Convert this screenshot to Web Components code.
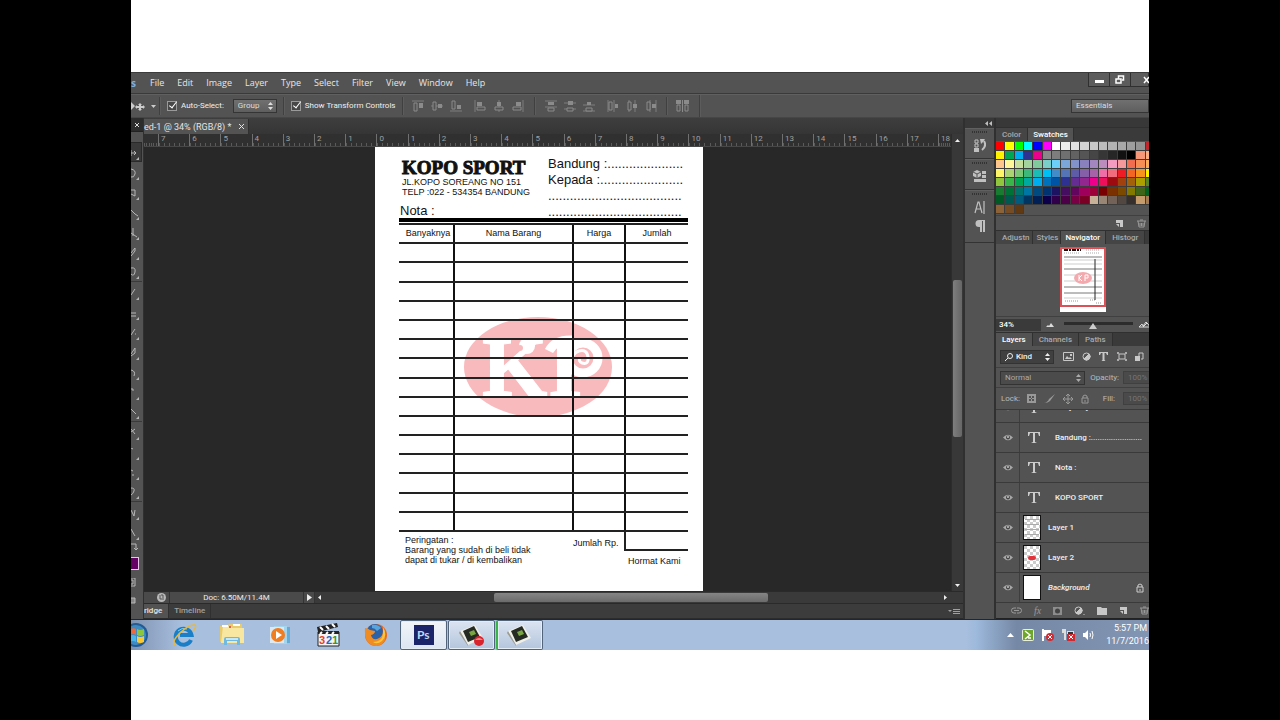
<!DOCTYPE html>
<html lang="en">
<head>
<meta charset="utf-8">
<title>Photo editor desktop</title>
<style>
html,body{margin:0;background:#000}
body{font:8px/12px Roboto,"Open Sans",sans-serif;color:#dcdcdc}
</style>
</head>
<body>
<desk-screen></desk-screen>
<script>
const BASE = `*{box-sizing:border-box}
button,input,select{font:inherit;color:inherit;background:none;border:0;padding:0;margin:0;border-radius:0;appearance:none;outline:0}
button{display:block}svg{display:block;flex:none}`;
function define(name, css, html, setup) {
  const t = document.createElement('template');
  t.innerHTML = `<style>${BASE}${css}</style>${html}`;
  customElements.define(name, class extends HTMLElement {
    constructor() {
      super();
      this.attachShadow({mode: 'open'}).append(t.content.cloneNode(true));
    }
    connectedCallback() { if (setup) setup(this.shadowRoot, this); }
  });
}
const svg = (w, h, body, extra = '') => `<svg width="${w}" height="${h}" viewBox="0 0 ${w} ${h}" fill="none" stroke="currentColor" ${extra} aria-hidden="true">${body}</svg>`;
const fill = (w, h, body) => `<svg width="${w}" height="${h}" viewBox="0 0 ${w} ${h}" fill="currentColor" aria-hidden="true">${body}</svg>`;
const updown = fill(5, 8, '<path d="M0 3 2.5 0 5 3zM0 5h5L2.500 8z"/>');

/* ---------- frame ---------- */
define('desk-screen', `
:host{display:grid;grid-template-columns:131px minmax(0,1fr) 131px;min-height:100vh}
main{grid-column:2;background:#fff;padding:72px 0 70px;display:flex;flex-direction:column}
.app{flex:1;display:flex;flex-direction:column;background:#535353;overflow:hidden}
.work{flex:1;display:grid;grid-template-columns:13px minmax(0,1fr) 32px 153px;background:#383838}
`, `<main><div class="app"><app-menu></app-menu><option-bar></option-bar>
<div class="work"><tool-strip></tool-strip><doc-window></doc-window><icon-dock></icon-dock><side-panels></side-panels></div>
<task-bar></task-bar></div></main>`);

/* ---------- menu ---------- */
define('app-menu', `
:host{display:flex;height:22px;border-top:1px solid #3c3c3c;border-bottom:1px solid #3a3a3a;font:9px/20px "Open Sans",sans-serif;color:#e6e6e6;overflow:hidden}
b{font-size:10px;color:#7fb0dc;width:17px;flex:none}
nav{display:flex;gap:13px;flex:1;padding-left:2px}
.win{display:flex;align-self:flex-start;height:14px;border:1px solid #303030;border-top:0;background:#5c5c5c;color:#fff}
.win button{width:21px;display:grid;place-items:center;border-right:1px solid #303030}
.win button:last-child{width:17px;padding-left:12px;border:0}
`, `<b>s</b><nav>${['File','Edit','Image','Layer','Type','Select','Filter','View','Window','Help'].map(m => `<button>${m}</button>`).join('')}</nav>
<div class="win"><button aria-label="Minimize">${fill(9,9,'<path d="M0 5h9v3H0z"/>')}</button>
<button aria-label="Restore">${svg(10,9,'<path d="M3.500 3.500V1h5v4H7M1 4h5v4H1z" stroke-width="1.500"/>')}</button>
<button aria-label="Close">${svg(7,8,'<path d="M1 1l5 6M6 1L1 7" stroke-width="1.500"/>')}</button></div>`);

/* ---------- options ---------- */
const alignIcons = [
 ['M0 1h12','M2 3h3v8H2z','M7 3h4v5H7z'],
 ['M0 6h12','M2 2h3v8H2z','M7 4h4v4H7z'],
 ['M0 11h12','M2 1h3v8H2z','M7 5h4v4H7z'],
 ['M1 0v12','M3 7h8v3H3z','M3 2h5v4H3z'],
 ['M6 0v12','M2 7h8v3H2z','M4 2h4v4H4z'],
 ['M11 0v12','M1 7h8v3H1z','M4 2h5v4H4z'],
 ['M0 1h12M0 7h12','M3 8h6v3H3z','M3 2h6v3H3z'],
 ['M0 3h12M0 9h12','M3 8h6v3H3z','M4 1h5v4H4z'],
 ['M0 5h12M0 11h12','M3 8h6v3H3z','M4 2h4v3H4z'],
 ['M1 0v12M7 0v12','M2 2h3v8H2z','M8 4h3v4H8z'],
 ['M3 0v12M9 0v12','M2 2h3v8H2z','M7 4h4v4H7z'],
 ['M5 0v12M11 0v12','M2 2h3v8H2z','M7 4h4v4H7z']
].map(([l,o,f]) => svg(12,12,`<path d="${l}" opacity=".8"/><path d="${o}" fill="#535353"/><path d="${f}" fill="currentColor" stroke="none"/>`));
define('option-bar', `
:host{display:flex;align-items:center;height:24px;border-top:1px solid #606060;border-bottom:1px solid #464646;overflow:hidden}
i{width:2px;height:18px;background:#404040;border-right:1px solid #5c5c5c;flex:none}
label{display:flex;align-items:center;gap:4px;color:#f0f0f0;white-space:nowrap}
.move{display:flex;align-items:center;gap:5px;width:28px;color:#ccc}
input{width:10px;height:10px;border:1px solid #9a9a9a;background:#474747;display:grid;place-items:center;overflow:visible}
input:checked::after{content:"";width:3px;height:7px;border:solid #fff;border-width:0 1px 1px 0;transform:translate(1px,-2px) rotate(38deg)}
.sel{position:relative;display:flex;align-items:center;border:1px solid #353535;background:linear-gradient(#707070,#5e5e5e);height:14px}
.sel svg{position:absolute;right:3px}
select{width:42px;height:12px;padding-left:4px;line-height:12px}
.set{display:flex;gap:7px;color:#8b8b8b}
.end{margin-left:auto;width:78px;height:14px}.end select{width:78px}
`, `<div class="move">${fill(15,12,'<path d="M0 2v8l4-4zM9 3l2 2h-1v1h2V5l2 2-2 2V8h-2v1h1l-2 2-2-2h1V8H6v1L4 7l2-2v1h2V5H7z"/>')}${fill(5,3,'<path d="M0 0h5L2.500 3z"/>')}</div>
<i></i><label style="margin:0 9px 0 6px"><input type="checkbox" checked>Auto-Select:</label>
<span class="sel"><select aria-label="Auto select target"><option>Group</option></select>${updown}</span>
<i style="margin:0 6px"></i><label style="margin-right:7px"><input type="checkbox" checked>Show Transform Controls</label>
<i style="margin-right:8px"></i><div class="set">${alignIcons.slice(0,3).join('')}</div><div class="set" style="margin:0 10px 0 12px">${alignIcons.slice(3,6).join('')}</div>
<i style="margin-right:9px"></i><div class="set">${alignIcons.slice(6,9).join('')}</div><div class="set" style="margin:0 9px 0 12px">${alignIcons.slice(9).join('')}</div>
<i style="margin-right:8px"></i><div class="set">${svg(13,12,'<path d="M1 5h3v6H1zM9 5h3v6H9zM6.500 0v12"/><path d="M0 0h5v4H0zM8 0h5v4H8z" fill="currentColor" stroke="none"/>')}</div><i style="margin-left:10px;height:22px"></i>
<span class="sel end"><select aria-label="Workspace"><option>Essentials</option></select></span>`);

/* ---------- tools ---------- */
const tools = ['M0 5h5M3 3l2 2-2 2M0 2v6','M0 1q5 1 4 5t-4 3','M0 2h4v6L0 6','M0 2l4 4 3 2','M2 0v8M0 5l6 4','M0 5l4-5v3l-4 5','M0 1q5-1 4 4t-4 2','M0 7l4-6','M0 5h5M0 8h5','M0 7l4-6M4 6h1','M0 6l4-6v5L0 8','M0 2q5 1 3 6','M0 1h2v2','M0 2l5 5','M0 4l4-3M0 1l4 5','M0 0l2 1','M0 2l2 1M1 7h2','M0 1q4 0 3 3t-3 4','M0 2l3 6 1-6','M0 1l4 7'];
define('tool-strip', `
:host{display:flex;flex-direction:column;background:#535353;border-right:1px solid #303030;color:#b8b8b8;overflow:hidden}
.x{height:14px;background:#2c2c2c;border-bottom:1px solid #222;color:#ddd;padding-left:3px;margin-bottom:10px;flex:none}
.t{height:20px;width:11px;padding-top:3px}
.t:nth-of-type(2){background:#3a3a3a;border:1px solid #2a2a2a;border-left:0}
.sep{border-bottom:1px solid #3a3a3a}
.fg{width:8px;height:13px;background:#650065;border:1px solid #e8c8e8;border-left:0;margin:6px 0 8px;flex:none}
`, `<button class="x" aria-label="Close tools">${svg(6,6,'<path d="M1 1l4 4M5 1L1 5"/>')}</button>${tools.map((d,i) => `<button class="t${[6,13,17].includes(i)?' sep':''}" aria-label="Tool ${i+1}">${svg(8,12,`<path d="${d}"/><path d="M8 9v3H5z" fill="currentColor" stroke="none"/>`)}</button>`).join('')}
${svg(8,9,'<path d="M0 2h5v6M3 6l2 2 2-2"/>')}<span class="fg"></span><button aria-label="Quick mask">${svg(5,9,'<path d="M0 0h4v8H0M0 2h2v4H0"/>')}</button><button style="margin-top:10px" aria-label="Screen mode">${svg(5,9,'<path d="M0 1h4v5H0" fill="#888"/>')}</button>`);

/* ---------- document window ---------- */
define('doc-window', `
:host{display:flex;flex-direction:column;min-width:0;background:#282828;border-right:1px solid #303030}
.tabs{height:16px;background:linear-gradient(#3e3e3e,#353535);display:flex}
.tab{display:flex;align-items:center;background:#535353;height:15px;margin-top:1px;padding-right:4px;border-right:1px solid #303030;color:#e4e4e4;font-size:9px;white-space:pre}
.tab button{margin-left:8px}
.mid{flex:1;display:grid;grid-template-columns:minmax(0,1fr) 12px}
.view{display:flex;flex-direction:column;min-width:0}
.canvas{flex:1;display:flex;justify-content:center;padding-right:17px}
.vs{background:#383838;border-left:1px solid #2c2c2c;display:flex;flex-direction:column;align-items:center;color:#eee;padding:5px 0 4px}
.vs i{width:9px;height:157px;margin:138px 0 auto;background:linear-gradient(90deg,#7e7e7e,#666);border-radius:2px}
.status{height:13px;display:flex;align-items:center;background:#3a3a3a;border-top:1px solid #2a2a2a;border-bottom:1px solid #2a2a2a;color:#eee}
.cell{background:#4a4a4a;border-right:1px solid #333;height:11px;display:grid;place-items:center}
.status i{height:9px;width:274px;background:linear-gradient(#858585,#6b6b6b);border-radius:2px;margin:0 auto 0 167px}
.foot{height:15px;background:#3c3c3c;display:flex;border-bottom:1px solid #2c2c2c;color:#a0a0a0;font-weight:500}
.foot button{border-right:1px solid #303030;padding:0 5px;line-height:14px;height:14px}
.foot button:first-of-type{background:#535353;color:#e6e6e6;padding:0 6px 0 0}
`, `<div class="tabs"><div class="tab">ed-1 @ 34% (RGB/8) *<button aria-label="Close document">${svg(5,5,'<path d="M0 0l5 5M5 0L0 5"/>')}</button></div></div>
<div class="mid"><div class="view"><ruler-bar></ruler-bar><div class="canvas"><nota-page></nota-page></div></div>
<div class="vs">${fill(5,3,'<path d="M0 3h5L2.500 0z"/>')}<i></i>${fill(5,3,'<path d="M0 0h5L2.500 3z"/>')}</div></div>
<div class="status"><span class="cell" style="width:26px;padding-left:10px">${fill(9,9,'<circle cx="4.500" cy="4.500" r="4.500" fill="#b8b8b8"/><path d="M3 2v4h4M4 2h2v3" stroke="#555" fill="none"/>')}</span><span class="cell" style="width:134px">Doc: 6.50M/11.4M</span><span class="cell" style="width:11px">${fill(5,7,'<path d="M0 0v7l5-3.500z"/>')}</span>${fill(12,5,'<path d="M6 0v5L3 2.500z"/>')}<i></i>${fill(21,5,'<path d="M2 0v5l3-2.500z"/>')}</div>
<div class="foot"><button>ridge</button><button>Timeline</button>${fill(12,8,'<path d="M0 2h4L2 4zM5 1h7v1H5zM5 3h7v1H5zM5 5h7v1H5z"/>').replace('<svg','<svg style="margin:4px 3px 0 auto"')}</div>`);

define('ruler-bar', `
:host{display:flex;height:13px;background:#303030;border-bottom:1px solid #484848;color:#a0a0a0;line-height:10px;font-size:8px}
span{flex:1;min-width:0;border-left:1px solid #707070;padding-left:2px;white-space:nowrap;background:repeating-linear-gradient(90deg,#5a5a5a 0 1px,transparent 1px 16.66%) 0 100%/100% 3px no-repeat}
span:first-of-type{flex:0 0 14px;border:0}span:last-of-type{flex:0 0 13px}
`, '', root => {
  ['',7,6,5,4,3,2,1,0,1,2,3,4,5,6,7,8,9,10,11,12,13,14,15,16,17,18].forEach(n => {
    const s = document.createElement('span'); s.textContent = n; root.append(s);
  });
});

define('kp-mark', `:host{display:block}svg{width:100%;height:auto}text{font:bold 84px "Liberation Serif",serif}`,
`<svg viewBox="0 0 148 100"><ellipse cx="74" cy="50" rx="74" ry="50" fill="#f9babd"/>
<g fill="#fff" stroke="#fff"><text x="18" y="79">K</text><text x="85" y="79">P</text></g>
<path d="M56 20l9-3 5 5-8 5z" fill="#f9babd"/><circle cx="63" cy="29" r="8" fill="#fff"/><circle cx="56" cy="31" r="3" fill="#f9babd"/>
<path d="M84 17h22v7q-12 1-14 9l-8 6z" fill="#f9babd"/>
<path d="M85 34q6-12 24-11" stroke="#fff" stroke-width="9" fill="none"/>
<circle cx="119" cy="41" r="15" fill="#f9babd" stroke="#fff" stroke-width="9"/>
<path d="M107 50q0-14 8-16t9 6-6 6q-4-2-2-5" stroke="#fff" stroke-width="3" fill="none"/></svg>`);

define('nota-page', `
:host{display:block;position:relative;width:328px;flex:none;background:#fff;color:#111;font:9px/10px "Liberation Sans",sans-serif;padding:9px 15px 0 24px}
header{display:grid;grid-template-columns:148px 1fr;height:62px}
h1{font:bold 19px/24px "Liberation Serif",serif;margin:0 0 0 3px;-webkit-text-stroke:1px #111;white-space:nowrap;height:21px}
.ad{margin-left:3px;white-space:nowrap}
.fields{font-size:13px;line-height:16px;white-space:nowrap;padding-left:1px}
.left{display:flex;flex-direction:column;white-space:nowrap}.nota{font-size:13px;line-height:16px;margin:6px 0 0 1px}
.bar{height:4px;background:#000;margin-bottom:1px}
table{position:relative;width:289px;height:309px;border-collapse:collapse;table-layout:fixed}
tr{height:19px}th{font-weight:400;padding:0 0 2px;text-align:center}
td{padding:0}th,td{border-bottom:2px solid #222;border-top:2px solid #222}
th:first-child{padding-left:4px}
th+th,td+td{border-left:2px solid #111}
kp-mark{position:absolute;left:89px;top:170px;width:148px}
.foot{display:grid;grid-template-columns:169px 57px 63px;height:50px}
.foot p{margin:3px 0 0 6px;white-space:nowrap}.foot .rp{margin:6px 0 0}.foot .rp{padding-left:5px}
.box{border:solid #222;border-width:0 0 2px 2px;height:19px;margin-left:-1px}
.hk{margin:5px 0 0 3px;white-space:nowrap}
`, `<kp-mark></kp-mark><header><div class="left"><h1>KOPO SPORT</h1><div class="ad">JL.KOPO SOREANG NO 151<br>TELP :022 - 534354 BANDUNG</div><div class="nota">Nota :</div></div>
<div class="fields">Bandung :.....................<br>Kepada :.......................<br>.....................................<br>.....................................</div></header>
<div class="bar"></div><table><colgroup><col style="width:55px"><col style="width:119px"><col style="width:52px"><col></colgroup><tbody><tr><th>Banyaknya</th><th>Nama Barang</th><th>Harga</th><th>Jumlah</th></tr></tbody></table>
<div class="foot"><p>Peringatan :<br>Barang yang sudah di beli tidak<br>dapat di tukar / di kembalikan</p><p class="rp">Jumlah Rp.</p><div><div class="box"></div><div class="hk">Hormat Kami</div></div></div>`, root => {
  const body = root.querySelector('tbody');
  for (let i = 0; i < 15; i++) {
    const r = body.insertRow();
    for (let c = 0; c < 4; c++) r.insertCell();
  }
});

/* ---------- icon dock ---------- */
define('icon-dock', `
:host{display:flex;flex-direction:column;background:#535353;border:solid #303030;border-width:0 2px 0 1px;color:#c0c0c0}
.h{height:10px;background:#383838;padding:3px 2px 0 0;display:flex;justify-content:flex-end}
.g{border-bottom:1px solid #333;border-top:1px solid #606060;padding-top:2px;display:flex;flex-direction:column;align-items:center;gap:6px}
.g::before{content:"";width:16px;height:2px;background:repeating-linear-gradient(90deg,#333 0 1px,transparent 1px 2px)}
`, `<div class="h">${fill(7,5,'<path d="M3 0v5L0 2.500zM7 0v5L4 2.500z"/>')}</div>
<div class="g" style="height:31px"><button aria-label="History">${svg(12,13,'<path d="M1 1h3v3H1zM1 5h3v3H1z"/><path d="M0 9h5v4H0z" fill="currentColor" stroke="none"/><path d="M10 2q3 5-2 9" stroke-width="2"/><path d="M11 0H6l1 5 2-2z" fill="currentColor" stroke="none"/>')}</button></div>
<div class="g" style="height:31px"><button aria-label="Properties">${fill(14,12,'<path d="M0 2l4-2 4 2v4L4 8 0 6zM9 1h4v3H9zM9 5h4v3H9zM1 9h12v3H1z"/><path d="M0 2l4 2 4-2M4 4v4" stroke="#535353" fill="none"/>')}</button></div>
<div class="g" style="height:53px"><button aria-label="Character">${svg(11,13,'<path d="M1 12L4 1h1l3 11M2 8h5M10 0v13" stroke-width="1.200"/>')}</button><button aria-label="Paragraph">${fill(10,12,'<path d="M4 0h6v12H8V1H7v11H5V7H4a3.500 3.500 0 010-7z"/>')}</button></div>`);

/* ---------- side panels ---------- */
define('panel-tabs', `
:host{display:flex;height:14px;background:#3a3a3a;border-top:1px solid #303030;overflow:hidden;flex:none;white-space:nowrap}
`, '<slot></slot>');
const swatches = [
'f00 ff0 0f0 0ff 00f f0f fff ececec e0e0e0 d4d4d4 c8c8c8 bcbcbc b2b2b2 a8a8a8 9e9e9e 949494 c1272d',
'fff200 00a651 00aeef 2e3192 ec008c 898989 7d7d7d 707070 626262 555 464646 363636 262626 111 000 f7977a fbad82',
'fdc68c fff799 c6df9c a4d49d 81ca9d 7bcdc9 6ccff7 7ca6d8 8293ca 8881be a286bd bc8cbf f49bc1 f5999d f26c4f f68e56 fbaf5d',
'fff568 acd373 7cc576 3cb878 1cbbb4 00bff3 438cca 5573b7 5e5ca7 855fa8 a763a8 ef6ea8 f16d7e ee1c24 f26522 f7941d fff200',
'8fc63d 39b54a 00a650 00a99e 00aeef 0072bc 0054a5 2f3192 652c91 91278f ed008c ee105a 9d0a0f a1410d a36209 aba000 598527',
'197b30 007236 00746b 0076a4 004a80 003370 1d1363 450e61 62055f 9e005c 9d0039 790000 7b3000 7c4900 827a00 3f6618 045f20',
'005824 005951 005b7e 003562 002056 0c004b 30004a 4b0048 7a0045 7a0026 c7b198 998675 726257 534741 362f2c c69c6d a67c52',
'8c6239 754c24 603913'].join(' ').split(' ');
define('swatch-grid', `:host{display:grid;grid-template-columns:repeat(17,1fr);grid-auto-rows:9px;margin-right:-6px;height:74px;padding-top:1px}
button{border:solid #3c3c3c;border-width:0 1px 1px 0}`,
 swatches.map(c => `<button aria-label="Swatch ${c}" style="background:#${c}"></button>`).join(''));

const newIcon = fill(9,9,'<path d="M1 1h7v7H5V4H1z"/><path d="M1 5h3v3z"/>');
const trash = svg(9,9,'<path d="M0 2h9M3 1h3M1 2l1 6h5l1-6M3 4v3M4.500 4v3M6 4v3"/>');
define('nav-thumb', `:host{display:block;width:46px;height:65px;background:#fff}
.r{width:46px;height:60px;border:2px solid #dc5058}svg{width:100%;height:100%}`,
`<div class="r"><svg viewBox="0 0 42 56"><g stroke="#555" fill="none"><path d="M2 1h17" stroke="#111" stroke-width="2" stroke-dasharray="4 1 2 1"/><path d="M2 4h16M24 1h14M24 4h14" stroke-dasharray="1 1" opacity=".5"/><path d="M2 8h38M2 20h38M2 38h38M2 44h38" stroke-width=".8"/><path d="M33 10v41" stroke="#222"/><path d="M2 11h38M2 26h38M2 15h38M2 32h38M2 49h38" opacity=".3"/><path d="M3 52h13M28 51h5M34 54h6" stroke-dasharray="1 1" opacity=".6"/></g><ellipse cx="21" cy="29" rx="9" ry="6" fill="#f3a9ad"/><path d="M17 26v6M20 26l-3 3 3 3M23 32v-6h3v3h-3" stroke="#fff" fill="none"/></svg></div>`);

const eye = fill(10,7,'<path d="M0 3.500Q5-2 10 3.500 5 9 0 3.500z" opacity=".75"/><circle cx="5" cy="3.500" r="2" fill="#444"/><circle cx="5" cy="3" r="1"/>');
const bigT = fill(13,13,'<path d="M0 1h12v4h-1l-1-3H7v9l2 1H3l2-1V2H2L1 5H0z"/>');
const lock = svg(8,10,'<path d="M1 4h6v5H1zM2 4V2q2-2 4 0v2M4 6v2"/>');
define('layer-row', `
:host{display:grid;grid-template-columns:24px 31px minmax(0,1fr) auto;align-items:center;height:30px;flex:none;border-bottom:1px solid #3a3a3a;font-weight:500;color:#f0f0f0}
.e{height:29px;border-right:1px solid #3e3e3e;display:grid;place-items:center;color:#c4c4c4}
.k{padding-left:8px;color:#ccc}
.th{display:none;margin-left:3px;width:18px;height:25px;border:1px solid #111;background:#fff}
:host([kind=grid]) .th,:host([kind=logo]) .th{background:repeating-conic-gradient(#fff 0 25%,#ccc 0 50%) 0 0/6px 6px}
:host(:not([kind=text])) .th{display:grid;place-items:center}
:host([kind=grid]) .th::after{content:"";width:14px;height:17px;background:repeating-linear-gradient(#aaa 0 1px,transparent 1px 5px)}
:host([kind=logo]) .th::after{content:"";width:8px;height:4px;background:#e5323a;border-radius:2px}
.n{white-space:nowrap;overflow:hidden;padding-left:4px}:host(:not([kind=text])) .n{margin-left:-7px}
:host([kind=bg]) .n{font-style:italic}
.l{display:none;margin-right:5px;color:#ccc}:host([kind=bg]) .l{display:block}
`, `<span class="e">${eye}</span><span><span class="k">${bigT}</span><span class="th"></span></span><span class="n"><slot></slot></span><span class="l">${lock}</span>`,
 (root, el) => root.querySelector('.k').style.display = el.getAttribute('kind') === 'text' ? 'block' : 'none');

define('side-panels', `
:host{display:flex;flex-direction:column;background:#535353;overflow:hidden;min-width:0}
panel-tabs button{font-weight:500;line-height:13px;background:#454545;border-right:1px solid #303030;padding:0 6px;color:#aaa;height:13px}
panel-tabs button[aria-selected=true]{background:#535353;color:#fff}
.h{height:9px;background:#383838;flex:none}
.row{display:flex;align-items:center;flex:none;border-top:1px solid #404040}
.nav{height:72px;flex:none;display:flex;padding:3px 0 0 64px}
.zoom input[type=text]{width:45px;height:12px;background:#3a3a3a;padding-left:3px;color:#fff;font-weight:500}
input[type=range]{width:69px;height:9px;margin:0 6px 0 10px;background:linear-gradient(#2c2c2c,#2c2c2c) 0 2px/100% 3px no-repeat}
input[type=range]::-webkit-slider-thumb{appearance:none;width:8px;height:6px;background:#ccc;clip-path:polygon(50% 0,100% 100%,0 100%);margin-top:3px}
.sel{position:relative;display:flex;align-items:center;height:14px;background:#4b4b4b;border:1px solid #333;margin-left:4px;flex:none}
.sel svg{position:absolute;right:3px}.sel svg.q{left:4px;right:auto}
select{height:12px;line-height:12px;width:100%;opacity:1}
.ic{display:flex;align-items:center;color:#c8c8c8;flex:none}
.pct{width:28px;height:13px;background:#4a4a4a;border:1px solid #404040;color:#747474;padding-left:4px;flex:none;margin-left:4px}
label{display:flex;align-items:center;margin-left:auto;color:#bbb;flex:none;margin-right:-2px}
.dim{color:#999}
.layers{flex:1 0 194px;height:194px;display:flex;flex-direction:column;justify-content:flex-end;overflow:hidden;border-top:1px solid #3a3a3a}
`, `<div class="h"></div>
<panel-tabs><button>Color</button><button aria-selected="true" style="padding:0 5px">Swatches</button></panel-tabs>
<swatch-grid></swatch-grid>
<div class="row ic" style="height:15px;justify-content:flex-end;gap:13px;padding-right:3px">${newIcon}<span class="dim">${trash}</span></div>
<panel-tabs><button style="padding-right:2px">Adjustn</button><button style="padding:0 2px 0 4px">Styles</button><button aria-selected="true" style="padding:0 5px 0 4px">Navigator</button><button>Histogr</button></panel-tabs>
<div class="nav"><nav-thumb></nav-thumb></div>
<div class="row zoom" style="height:16px"><input type="text" value="34%" aria-label="Zoom">${fill(8,5,'<path d="M0 5l2-2 1 1 2-3 3 4z"/>').replace('<svg','<svg style="margin-left:5px"')}<input type="range" value="41" aria-label="Zoom slider">${svg(12,7,'<path d="M0 6l3-3 1 2 3-4 2 2 2 3zM4 6l4-4"/>')}</div>
<panel-tabs><button aria-selected="true">Layers</button><button>Channels</button><button>Paths</button></panel-tabs>
<div class="row" style="height:21px;border:0"><span class="sel" style="width:54px;background:#404040;color:#eee;font-weight:500"><svg class="q" width="8" height="8" viewBox="0 0 8 8" fill="none" stroke="currentColor"><circle cx="5" cy="3" r="2.500"/><path d="M3 5L0 8"/></svg><select aria-label="Filter kind" style="padding-left:15px"><option>Kind</option></select>${updown}</span>
<span class="ic" style="gap:8px;padding-left:9px">${svg(11,9,'<path d="M0.500.500h10v8H.500z"/><path d="M2 7l2-3 2 2 1-1 2 2zM7 2h2v2H7z" fill="currentColor" stroke="none"/>')}${svg(9,9,'<circle cx="4.500" cy="4.500" r="3.500"/><path d="M7 2L2 7a3.500 3.500 0 005-5z" fill="currentColor"/>')}${fill(10,9,'<path d="M0 0h9v3H8L7 1H5.500v7l1 1h-4l1-1V1H2L1 3H0z"/>')}${svg(10,9,'<path d="M2 2h6v5H2zM0 1h2M8 1h2M0 8h2M8 8h2M1 0v2M9 0v2M1 7v2M9 7v2"/>')}${svg(9,10,'<path d="M4 4V1h4v6H6"/><path d="M0 4h5v5H0z" fill="currentColor" stroke="none"/>')}</span></div>
<div class="row" style="height:20px"><span class="sel" style="width:85px;color:#aaa"><select aria-label="Blend mode" style="padding-left:4px"><option>Normal</option></select>${updown}</span><label>Opacity:<input class="pct" value="100%" disabled></label></div>
<div class="row" style="height:22px"><span style="margin:0 7px 0 5px;color:#bbb">Lock:</span><span class="ic" style="gap:8px;color:#999">${fill(9,9,'<path d="M0 0h9v9H0z"/><path d="M2 2h2v2H2zM5 2h2v2H5zM4 4h1v1H4zM2 5h2v2H2zM5 5h2v2H5z" fill="#535353"/>')}${fill(11,9,'<path d="M11 0L6 7 5 5zM5 5l1 2q-2 2-6 2 4-1 5-4z"/>')}${svg(10,10,'<path d="M5 0v10M0 5h10M3 2l2-2 2 2M3 8l2 2 2-2M2 3L0 5l2 2M8 3l2 2-2 2"/>')}${lock}</span><label>Fill:<input class="pct" value="100%" disabled style="margin-left:8px"></label></div>
<div class="layers"><layer-row kind="text">Banyaknya &nbsp; &nbsp; &nbsp; &nbsp; &nbsp; &nbsp; &nbsp; &nbsp; &nbsp;Nm...</layer-row><layer-row kind="text">Bandung :.......................</layer-row><layer-row kind="text">Nota :</layer-row><layer-row kind="text">KOPO SPORT</layer-row><layer-row kind="grid">Layer 1</layer-row><layer-row kind="logo">Layer 2</layer-row><layer-row kind="bg">Background</layer-row></div>
<div class="ic" style="height:16px;gap:12px;padding-left:15px;border-bottom:1px solid #222"><span class="dim">${svg(11,7,'<path d="M5 1H3a2.500 2.500 0 000 5h2M6 1h2a2.500 2.500 0 010 5H6M3 3.500h5"/>')}</span><span class="dim" style="font:italic 10px/12px 'Liberation Serif',serif">fx</span>${fill(9,8,'<path d="M0 0h9v8H0z" opacity=".5"/><circle cx="4.500" cy="4" r="2.500" fill="#444"/>')}${svg(11,9,'<circle cx="4.500" cy="4.500" r="3.500"/><path d="M7 2L2 7a3.500 3.500 0 005-5z" fill="currentColor"/><path d="M10 8v1"/>')}${fill(10,8,'<path d="M0 0h4l1 1h5v7H0z"/>')}${newIcon}<span class="dim">${trash}</span></div>`);

/* ---------- task bar ---------- */
define('task-bar', `
:host{display:flex;align-items:center;height:31px;flex:none;border-top:1px solid #1c2838;overflow:hidden;color:#fff;
background:linear-gradient(90deg,#7f93b3 0,#a9bfde 5%,#a9bfde 82%,#9db9dc 83%,#7588a5 87%,#8295b2 100%)}
button{width:47px;height:30px;display:grid;place-items:center;margin-right:1px;flex:none}
.orb{width:28px;margin:0 8px 0 -7px;justify-items:start}
.on{border:1px solid #52637c;border-radius:2px;box-shadow:inset 0 0 0 1px #e4ecf6;background:linear-gradient(#dbe4f1,#b4c5dd)}
.act{background:linear-gradient(#f2f5fa,#dce5f1)}
.tray{margin-left:auto;display:flex;align-items:center;gap:8px}
.clock{font-size:9px;line-height:13px;text-align:right;white-space:nowrap;margin-left:3px}
.clock div:first-child{padding-right:2px}
`, `<button class="orb" aria-label="Start">${fill(26,26,'<circle cx="12" cy="13" r="12" fill="#245b92"/><circle cx="12" cy="13" r="10" fill="#3e8ac2"/><path d="M5 8q4-3 7-1v6q-3-2-7 0z" fill="#ee6a3c"/><path d="M13 7q3 2 7 0v6q-4 2-7 0z" fill="#8cc63e"/><path d="M5 14q4-2 7 0v6q-3-2-7 0z" fill="#4db5e8"/><path d="M13 14q3 2 7 0v6q-4 2-7 0z" fill="#fdc931"/>')}</button>
<button aria-label="Internet Explorer">${svg(26,24,'<path d="M20 17a8 8 0 11.500-5H9" stroke="#1a7fc6" stroke-width="4"/><path d="M7 8q4-4 9-2" stroke="#7fd3f7" stroke-width="1"/><path d="M4 22q-4-3 5-12T24 2q2 2-2 6" stroke="#e9b93a" stroke-width="1.500"/>')}</button>
<button aria-label="Explorer">${fill(26,24,'<path d="M1 3h7l2-2h13v18H1z" fill="#e8cb6c"/><path d="M4 3h8l1 2h12v15H2z" fill="#f7e7a0"/><path d="M3 2h6v2H3zM14 1h7v2h-7z" fill="#fff"/><circle cx="11" cy="4" r="1" fill="#d33"/><path d="M5 22v-6q0-2 2-2h12q2 0 2 2v6h-3v-4H8v4z" fill="#72b9df"/><path d="M7 15h12v2H7z" fill="#c5e8f8"/>')}</button>
<button aria-label="Media player">${fill(22,20,'<path d="M7 2h14v16H7z" fill="#65add7"/><path d="M5 1h13v18H5z" fill="#a4d5ef"/><path d="M1 2h14v16H1z" fill="#dce9f2"/><circle cx="9" cy="10" r="7" fill="#ef7d22"/><path d="M7 6v8l6-4z" fill="#fff"/>')}</button>
<button aria-label="Media Player Classic"><svg width="24" height="24" viewBox="0 0 24 24"><path d="M1 4l20-4 1 4L2 9z" fill="#222"/><path d="M2 9h21v14H2z" fill="#f4f4f4" stroke="#222"/><path d="M2 8h21v3H2z" fill="#222"/><path d="M4 4l3 3M10 3l3 3M16 1l3 3M6 9l-2 2M12 9l-2 2M18 9l-2 2" stroke="#fff" stroke-width="2"/><g font-family="Liberation Sans,sans-serif" font-weight="700" font-size="11"><text x="3" y="21" fill="#e0432c">3</text><text x="10" y="21" fill="#2764c0">2</text><text x="16" y="21" fill="#2f9a3c">1</text></g></svg></button>
<button aria-label="Firefox">${fill(24,24,'<circle cx="12" cy="12" r="11" fill="#e66a1f"/><circle cx="11" cy="9" r="8" fill="#2c62a8"/><path d="M8 2q6-1 9 3l-4 3q-2-3-5-3z" fill="#58a4dc"/><path d="M1 5q3 0 5 2l5 1q0 3-4 4 1 5 6 4 6-2 6-8 5 8-1 13-6 4-12 0T1 5z" fill="#f08c24"/><path d="M19 4q5 8-1 14-5 4-9 1 9 0 10-8z" fill="#fbc43a"/>')}</button>
<button class="on act" aria-label="Photoshop"><svg width="22" height="20" viewBox="0 0 22 20"><path d="M1 0h20v20H1z" fill="#1b2468"/><text x="4" y="14" font-family="Lato,sans-serif" font-weight="700" font-size="12" fill="#bcd8f5">Ps</text></svg></button>
<button class="on" aria-label="Recorder">${fill(26,22,'<path d="M1 7L16 1l8 13-15 7z" fill="#f0f0ea"/><path d="M4 7l11-5 6 11-12 5z" fill="#252a22"/><path d="M10 8l5-2 2 4-5 2z" fill="#79a642"/><path d="M1 7l8 14v1L0 9z" fill="#9b9b90"/><circle cx="20" cy="17" r="5" fill="#d8242c"/><path d="M16 16q4-4 8 0z" fill="#ef8a8e"/>')}</button>
<button class="on" style="border-left:2px solid #39b54a" aria-label="Camtasia">${fill(26,22,'<path d="M1 7L16 1l8 13-15 7z" fill="#f0f0ea"/><path d="M4 7l11-5 6 11-12 5z" fill="#252a22"/><path d="M10 8l5-2 2 4-5 2z" fill="#79a642"/><path d="M1 7l8 14v1L0 9z" fill="#9b9b90"/>')}</button>
<div class="tray">${fill(7,4,'<path d="M0 4h7L3.500 0z"/>')}
${fill(12,12,'<rect width="12" height="12" rx="2" fill="#e8f0d8"/><path d="M1 1h10v10H1z" fill="#6fa62c"/><path d="M3 2l5 4-5 4M6 9h3" stroke="#fff" stroke-width="1.500" fill="none"/>')}
${fill(12,12,'<path d="M0 0h2v12H0zM2 1h7v6H2z"/><circle cx="8" cy="8" r="4" fill="#cf2b32"/><path d="M6 6l4 4M10 6l-4 4" stroke="#fff"/>')}
${fill(13,12,'<path d="M0 0h4v11H2V4H0zM5 2h7v6H5z" fill="#ddd"/><path d="M6 3h5v4H6z" fill="#333"/><path d="M5 5h8v7H5z" fill="#cf2b32"/><path d="M7 6l4 4M11 6l-4 4" stroke="#fff"/>')}
${svg(12,10,'<path d="M0 3h2l3-3v10L2 7H0z" fill="currentColor" stroke="none"/><path d="M7 3q1 2 0 4M9 1q2 4 0 8"/>')}
<div class="clock"><div>5:57 PM</div><div>11/7/2016</div></div></div>`);
</script>
</body>
</html>
